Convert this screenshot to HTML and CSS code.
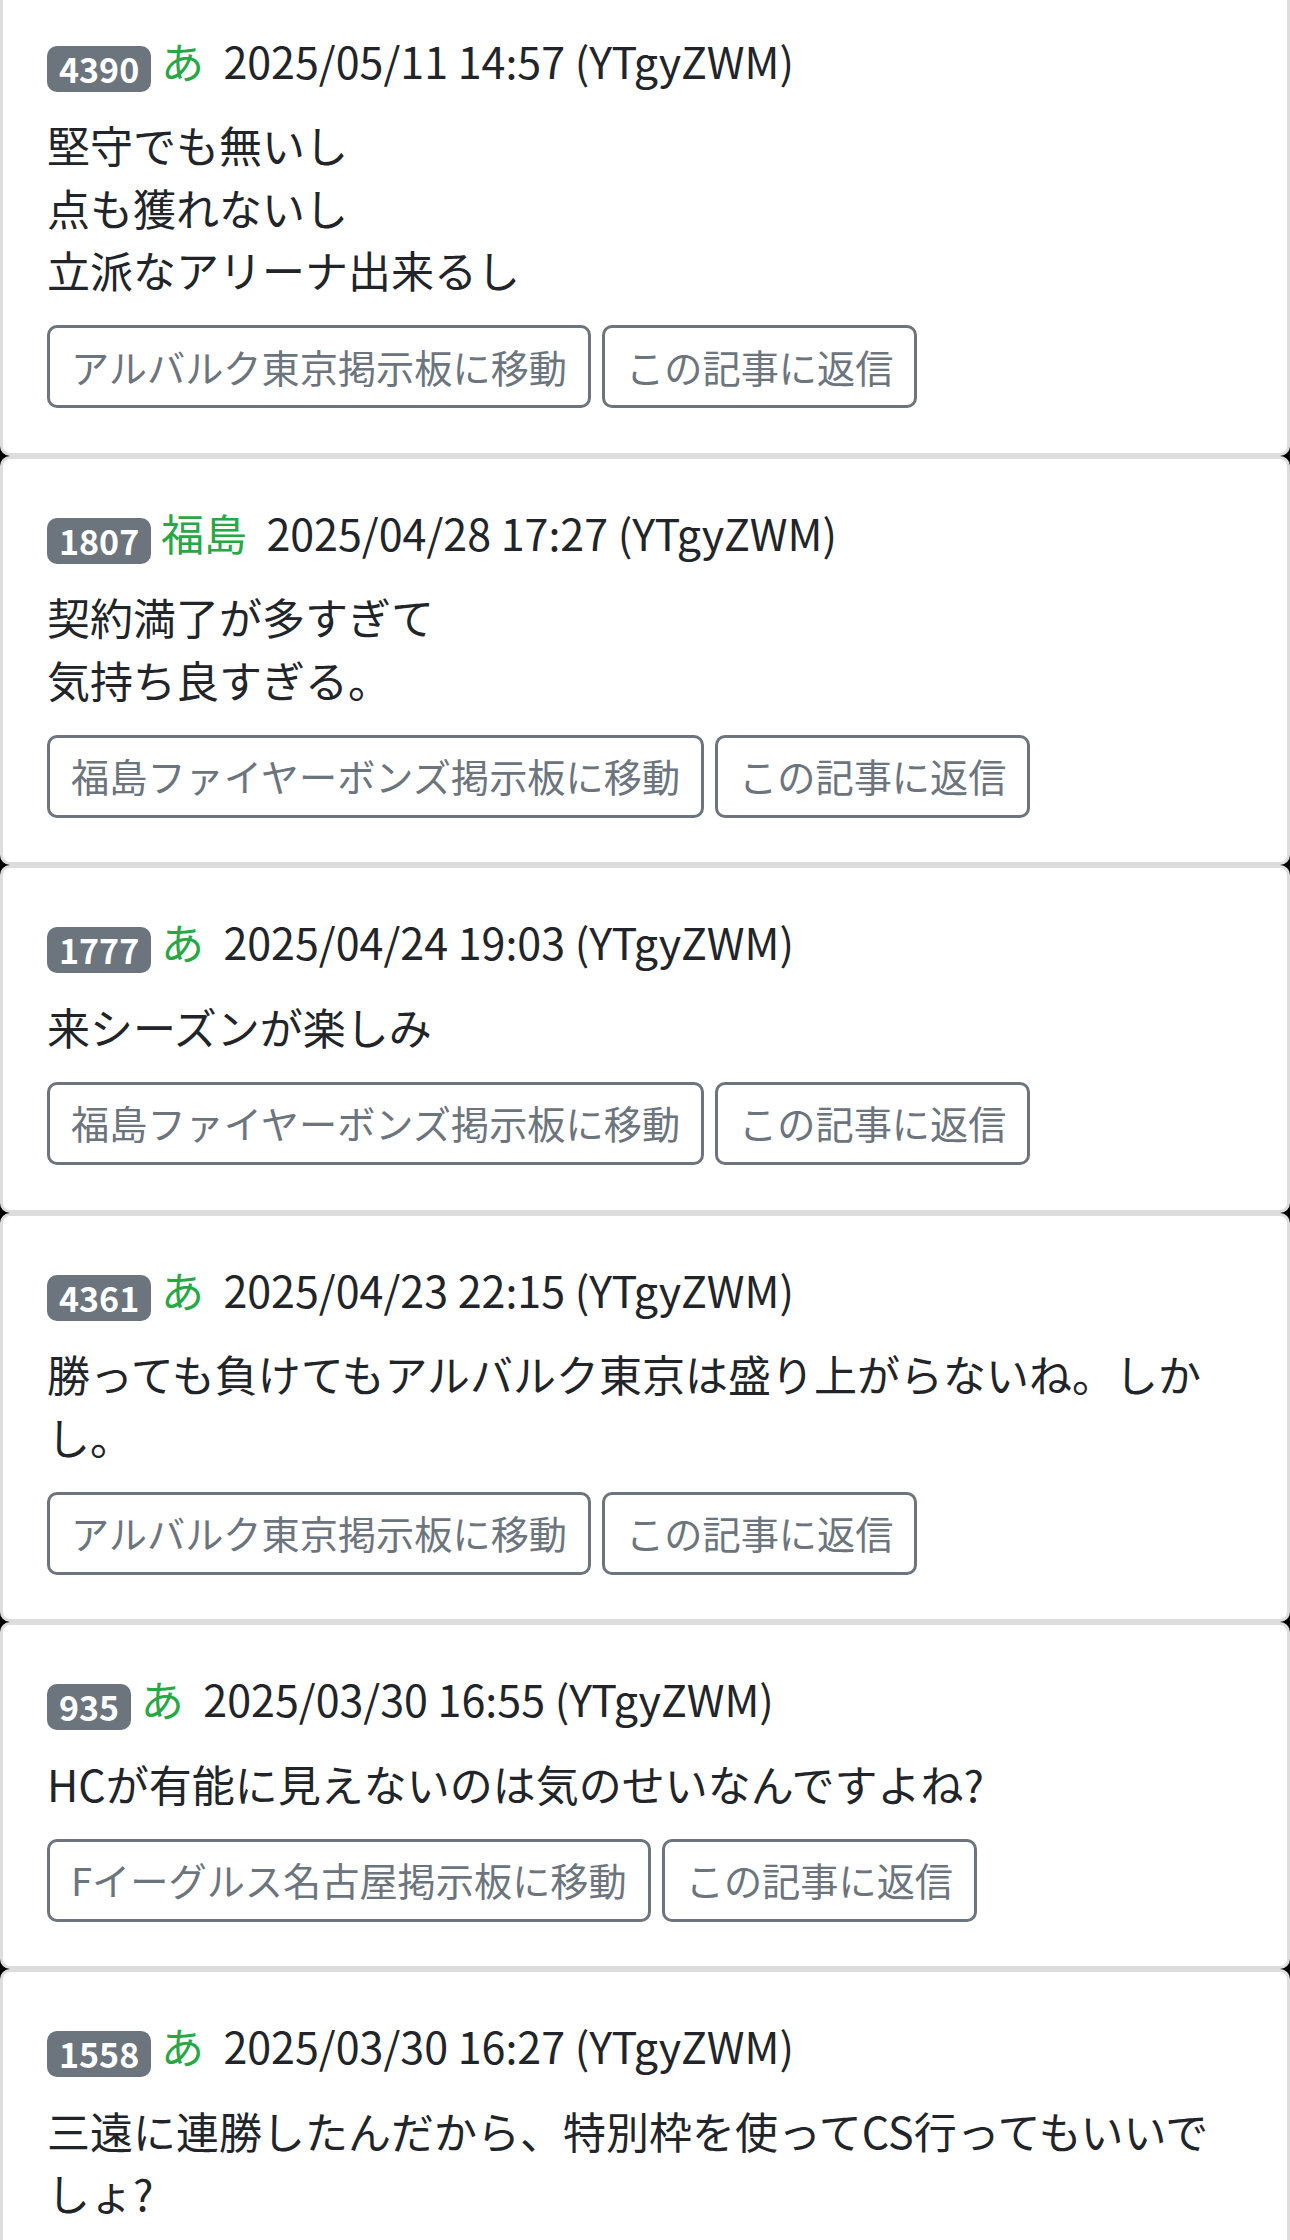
FILE: index.html
```html
<!DOCTYPE html>
<html lang="ja">
<head>
<meta charset="utf-8">
<title>投稿一覧</title>
<link rel="stylesheet" href="styles.css">
</head>
<body>
<div class="list">
  <div class="card">
    <div class="head"><span class="badge">4390</span> <span class="name">あ</span><span class="date">2025/05/11 14:57 (YTgyZWM)</span></div>
    <div class="text">堅守でも無いし<br>点も獲れないし<br>立派なアリーナ出来るし</div>
    <div class="actions"><a class="btn">アルバルク東京掲示板に移動</a><a class="btn">この記事に返信</a></div>
  </div>
  <div class="card">
    <div class="head"><span class="badge">1807</span> <span class="name">福島</span><span class="date">2025/04/28 17:27 (YTgyZWM)</span></div>
    <div class="text">契約満了が多すぎて<br>気持ち良すぎる。</div>
    <div class="actions"><a class="btn">福島ファイヤーボンズ掲示板に移動</a><a class="btn">この記事に返信</a></div>
  </div>
  <div class="card">
    <div class="head"><span class="badge">1777</span> <span class="name">あ</span><span class="date">2025/04/24 19:03 (YTgyZWM)</span></div>
    <div class="text">来シーズンが楽しみ</div>
    <div class="actions"><a class="btn">福島ファイヤーボンズ掲示板に移動</a><a class="btn">この記事に返信</a></div>
  </div>
  <div class="card">
    <div class="head"><span class="badge">4361</span> <span class="name">あ</span><span class="date">2025/04/23 22:15 (YTgyZWM)</span></div>
    <div class="text">勝っても負けてもアルバルク東京は盛り上がらないね。しかし。</div>
    <div class="actions"><a class="btn">アルバルク東京掲示板に移動</a><a class="btn">この記事に返信</a></div>
  </div>
  <div class="card">
    <div class="head"><span class="badge">935</span> <span class="name">あ</span><span class="date">2025/03/30 16:55 (YTgyZWM)</span></div>
    <div class="text">HCが有能に見えないのは気のせいなんですよね?</div>
    <div class="actions"><a class="btn">Fイーグルス名古屋掲示板に移動</a><a class="btn">この記事に返信</a></div>
  </div>
  <div class="card">
    <div class="head"><span class="badge">1558</span> <span class="name">あ</span><span class="date">2025/03/30 16:27 (YTgyZWM)</span></div>
    <div class="text">三遠に連勝したんだから、特別枠を使ってCS行ってもいいでしょ?</div>
    <div class="actions"><a class="btn">三遠ネオフェニックス掲示板に移動</a><a class="btn">この記事に返信</a></div>
  </div>
</div>
</body>
</html>
```

FILE: styles.css
```css
html {
  background: #000;
}
body {
  margin: 0;
  font-family: "Noto Sans CJK JP", "Noto Sans", sans-serif;
  font-size: 43px;
  line-height: 62.5px;
  color: #212529;
  overflow: hidden;
}
.list {
  margin-top: -16.5px;
  display: flex;
  flex-direction: column;
}
.card {
  background: #fff;
  border: 3px solid #dddddd;
  border-radius: 10px;
  padding: 42px 44px 44.6px;
}
.head {
  height: 62.5px;
  margin-bottom: 22px;
  white-space: nowrap;
}
.badge {
  display: inline-block;
  background: #6c757d;
  color: #fff;
  font-weight: 700;
  font-size: 34px;
  line-height: 34px;
  padding: 6px 12px;
  border-radius: 10px;
  vertical-align: -4px;
}
.name {
  color: #28a745;
}
.date {
  margin-left: 19.5px;
}
.text {
  margin-bottom: 24.6px;
}
.actions {
  display: flex;
  gap: 11px;
}
.btn {
  display: inline-block;
  border: 3px solid #6c757d;
  border-radius: 10px;
  color: #6c757d;
  background: #fff;
  font-size: 38.2px;
  line-height: 56px;
  padding: 10.5px 21px;
  white-space: nowrap;
}
```
